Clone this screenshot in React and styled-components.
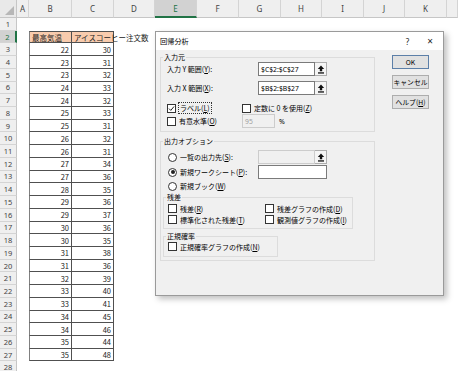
import React from "react";
import styled, { createGlobalStyle } from "styled-components";

const GlobalStyle = createGlobalStyle`
  body {
    margin: 0;
    background: #ffffff;
    font-family: "Noto Sans CJK JP", "Noto Sans", sans-serif;
  }
`;

const colWidths = [17, 12, 43, 42, 41, 42, 42, 42, 41, 42, 41, 42, 11];
const letters = ["", "A", "B", "C", "D", "E", "F", "G", "H", "I", "J", "K", ""];
const ROWS = 28;

const data = [
  [22, 30], [23, 31], [23, 32], [24, 33], [24, 32], [25, 33], [25, 31],
  [26, 32], [26, 31], [27, 34], [27, 36], [28, 35], [29, 36], [29, 37],
  [30, 36], [30, 35], [31, 38], [31, 36], [32, 39], [33, 40], [33, 41],
  [34, 45], [34, 46], [35, 44], [35, 48],
];

const Page = styled.div`
  position: relative;
  width: 458px;
  height: 371px;
  overflow: hidden;
`;

const Sheet = styled.div`
  display: grid;
  grid-template-columns: ${colWidths.map((w) => `${w}px`).join(" ")};
  grid-template-rows: 18px repeat(${ROWS}, 12.72px);
  background: #ffffff;
`;

const Corner = styled.div`
  position: relative;
  background: #e9e9e9;
  border-right: 1px solid #c6c6c6;
  border-bottom: 1px solid #c6c6c6;
  box-sizing: border-box;
  &::after {
    content: "";
    position: absolute;
    right: 2px;
    bottom: 2px;
    border-style: solid;
    border-width: 0 0 9px 9px;
    border-color: transparent transparent #b7b7b7 transparent;
  }
`;

const ColHead = styled.div`
  box-sizing: border-box;
  display: flex;
  align-items: center;
  justify-content: center;
  font-family: "Noto Sans", sans-serif;
  font-size: 8px;
  color: ${({ $selected }) => ($selected ? "#217346" : "#444")};
  background: ${({ $selected }) => ($selected ? "#d2d2d2" : "#efefef")};
  border-right: 1px solid #d4d4d4;
  border-bottom: ${({ $selected }) =>
    $selected ? "2px solid #217346" : "1px solid #c6c6c6"};
`;

const RowHead = styled.div`
  box-sizing: border-box;
  display: flex;
  align-items: center;
  justify-content: center;
  font-family: "Noto Sans", sans-serif;
  font-size: 7.5px;
  color: ${({ $selected }) => ($selected ? "#217346" : "#444")};
  background: ${({ $selected }) => ($selected ? "#d2d2d2" : "#efefef")};
  border-bottom: 1px solid #d4d4d4;
  border-right: ${({ $selected }) =>
    $selected ? "2px solid #217346" : "1px solid #c6c6c6"};
`;

const Cell = styled.div`
  box-sizing: border-box;
  display: flex;
  align-items: center;
  justify-content: ${({ $align }) => ($align === "right" ? "flex-end" : "flex-start")};
  padding: 0 2px;
  font-size: 7.5px;
  color: #222;
  white-space: nowrap;
  overflow: visible;
  position: relative;
  z-index: ${({ $boxed }) => ($boxed ? 1 : 0)};
  background: ${({ $fill }) => $fill || "transparent"};
  border-right: ${({ $boxed }) => ($boxed ? "1px solid #505050" : "none")};
  border-bottom: ${({ $boxed }) => ($boxed ? "1px solid #505050" : "none")};
  border-top: ${({ $top }) => ($top ? "1px solid #505050" : "none")};
  border-left: ${({ $left }) => ($left ? "1px solid #808080" : "none")};
`;

const Dialog = styled.div`
  position: absolute;
  left: 155px;
  top: 31px;
  width: 289px;
  height: 265px;
  box-sizing: border-box;
  background: #f0f0f0;
  border: 1px solid #9a9a9a;
  box-shadow: 3px 3px 6px rgba(0, 0, 0, 0.25);
  display: flex;
  flex-direction: column;
  font-size: 7px;
  color: #000;
`;

const TitleBar = styled.div`
  height: 18px;
  background: #ffffff;
  display: flex;
  align-items: center;
  padding: 0 10px 0 4px;
  font-size: 7.2px;
`;

const TitleText = styled.div`
  flex: 1;
`;

const TitleGlyph = styled.span`
  font-family: "Noto Sans", sans-serif;
  font-size: ${({ $size }) => $size}px;
  color: #222;
  margin-left: ${({ $ml }) => $ml || 0}px;
`;

const Body = styled.div`
  display: flex;
  padding: 3px 0 0 4px;
  gap: 17px;
`;

const Main = styled.div`
  width: 215px;
  display: flex;
  flex-direction: column;
`;

const Group = styled.fieldset`
  margin: ${({ $mt }) => $mt || 0}px 0 0 0;
  padding: 0 0 ${({ $pb }) => $pb}px 2px;
  min-width: 0;
  width: ${({ $w }) => $w}px;
  box-sizing: border-box;
  border: 1px solid #dcdcdc;
  display: flex;
  flex-direction: column;
`;

const Legend = styled.legend`
  padding: 0 1px;
  font-size: 7px;
  line-height: 9px;
`;

const Row = styled.div`
  display: flex;
  align-items: center;
  height: ${({ $h }) => $h}px;
  margin-top: ${({ $mt }) => $mt || 0}px;
  padding-left: ${({ $pl }) => ($pl === undefined ? 4 : $pl)}px;
  white-space: nowrap;
`;

const Label = styled.div`
  width: ${({ $w }) => $w}px;
  display: flex;
  align-items: center;
  flex-shrink: 0;
`;

const Key = styled.span`
  text-decoration: underline;
`;

const TextBox = styled.div`
  width: ${({ $w }) => $w}px;
  height: 14px;
  box-sizing: border-box;
  display: flex;
  align-items: center;
  padding-left: 2px;
  font-family: "Noto Sans", sans-serif;
  font-size: 6.8px;
  color: ${({ $disabled }) => ($disabled ? "#a0a0a0" : "#000")};
  background: ${({ $disabled }) => ($disabled ? "#f0f0f0" : "#ffffff")};
  border: 1px solid ${({ $disabled }) => ($disabled ? "#cccccc" : "#7a7a7a")};
`;

const RefButton = styled.div`
  width: 12px;
  height: 14px;
  box-sizing: border-box;
  display: flex;
  align-items: center;
  justify-content: center;
  background: #f5f5f5;
  border: 1px solid #adadad;
  border-left: none;
`;

const Box = styled.span`
  width: 9px;
  height: 9px;
  box-sizing: border-box;
  flex-shrink: 0;
  display: inline-flex;
  align-items: center;
  justify-content: center;
  background: #ffffff;
  border: 1px solid #333;
  border-radius: ${({ $round }) => ($round ? "50%" : "0")};
  margin-right: 3px;
`;

const Dot = styled.span`
  width: 4px;
  height: 4px;
  border-radius: 50%;
  background: #222;
`;

const Focus = styled.span`
  outline: 1px dotted #333;
  padding: 0 1px;
`;

const Percent = styled.span`
  margin-left: 4px;
  font-family: "Noto Sans", sans-serif;
`;

const Buttons = styled.div`
  width: 37px;
  display: flex;
  flex-direction: column;
  gap: 6px;
  padding-top: 2px;
`;

const Button = styled.div`
  height: 14px;
  box-sizing: border-box;
  display: flex;
  align-items: center;
  justify-content: center;
  background: #e1e1e1;
  font-size: 6.8px;
  border: 1px solid ${({ $default }) => ($default ? "#5c7fa8" : "#adadad")};
`;

const UpArrow = () => (
  <svg width="8" height="9" viewBox="0 0 8 9">
    <polygon points="4,0.5 0.8,4 2.8,4 2.8,6.2 5.2,6.2 5.2,4 7.2,4" fill="#111" />
    <rect x="1" y="7.3" width="6" height="1.3" fill="#111" />
  </svg>
);

const CheckMark = () => (
  <svg width="7" height="7" viewBox="0 0 7 7">
    <polyline points="1,3.6 2.8,5.4 6,1.5" fill="none" stroke="#222" strokeWidth="1" />
  </svg>
);

const CheckOption = ({ w, checked, focus, children }) => (
  <Label $w={w}>
    <Box>{checked && <CheckMark />}</Box>
    {focus ? <Focus>{children}</Focus> : <span>{children}</span>}
  </Label>
);

const RadioOption = ({ w, checked, children }) => (
  <Label $w={w}>
    <Box $round>{checked && <Dot />}</Box>
    <span>{children}</span>
  </Label>
);

const SheetGrid = () => {
  const cells = [];
  letters.forEach((l, i) => {
    if (i === 0) cells.push(<Corner key="corner" />);
    else cells.push(<ColHead key={`h${i}`} $selected={l === "E"}>{l}</ColHead>);
  });
  for (let r = 1; r <= ROWS; r++) {
    cells.push(<RowHead key={`r${r}`} $selected={r === 2}>{r}</RowHead>);
    for (let c = 1; c < letters.length; c++) {
      const col = letters[c];
      const inTable = (col === "B" || col === "C") && r >= 2 && r <= 27;
      let text = "";
      let fill;
      let align = "right";
      if (inTable && r === 2) {
        fill = "#f8cbad";
        align = "left";
        text = col === "B" ? "最高気温" : "アイスコーヒー注文数";
      } else if (inTable) {
        text = data[r - 3][col === "B" ? 0 : 1];
      }
      cells.push(
        <Cell
          key={`c${c}-${r}`}
          $boxed={inTable}
          $top={inTable && r === 2}
          $left={inTable && col === "B"}
          $fill={fill}
          $align={align}
        >
          {text}
        </Cell>
      );
    }
  }
  return <Sheet>{cells}</Sheet>;
};

const RegressionDialog = () => (
  <Dialog>
    <TitleBar>
      <TitleText>回帰分析</TitleText>
      <TitleGlyph $size={8}>?</TitleGlyph>
      <TitleGlyph $size={10} $ml={18}>×</TitleGlyph>
    </TitleBar>
    <Body>
      <Main>
        <Group $pb={3}>
          <Legend>入力元</Legend>
          <Row $h={14}>
            <Label $w={91}>入力 Y 範囲(<Key>Y</Key>):</Label>
            <TextBox $w={57}>$C$2:$C$27</TextBox>
            <RefButton><UpArrow /></RefButton>
          </Row>
          <Row $h={14} $mt={5}>
            <Label $w={91}>入力 X 範囲(<Key>X</Key>):</Label>
            <TextBox $w={57}>$B$2:$B$27</TextBox>
            <RefButton><UpArrow /></RefButton>
          </Row>
          <Row $h={12} $mt={7}>
            <CheckOption w={75} checked focus>ラベル(<Key>L</Key>)</CheckOption>
            <CheckOption w={120}>定数に 0 を使用(<Key>Z</Key>)</CheckOption>
          </Row>
          <Row $h={14}>
            <CheckOption w={75}>有意水準(<Key>O</Key>)</CheckOption>
            <TextBox $w={33} $disabled>95</TextBox>
            <Percent>%</Percent>
          </Row>
        </Group>
        <Group $mt={5} $pb={3}>
          <Legend>出力オプション</Legend>
          <Row $h={14} $mt={4} $pl={5}>
            <RadioOption w={90}>一覧の出力先(<Key>S</Key>):</RadioOption>
            <TextBox $w={57} $disabled />
            <RefButton><UpArrow /></RefButton>
          </Row>
          <Row $h={14} $mt={1} $pl={5}>
            <RadioOption w={90} checked>新規ワークシート(<Key>P</Key>):</RadioOption>
            <TextBox $w={69} />
          </Row>
          <Row $h={12} $mt={1} $pl={5}>
            <RadioOption w={90}>新規ブック(<Key>W</Key>)</RadioOption>
          </Row>
          <Group $w={190} $mt={1} $pb={3}>
            <Legend>残差</Legend>
            <Row $h={11} $mt={1} $pl={2}>
              <CheckOption w={97}>残差(<Key>R</Key>)</CheckOption>
              <CheckOption w={88}>残差グラフの作成(<Key>D</Key>)</CheckOption>
            </Row>
            <Row $h={11} $pl={2}>
              <CheckOption w={97}>標準化された残差(<Key>T</Key>)</CheckOption>
              <CheckOption w={88}>観測値グラフの作成(<Key>I</Key>)</CheckOption>
            </Row>
          </Group>
          <Group $w={115} $mt={3} $pb={4}>
            <Legend>正規確率</Legend>
            <Row $h={11} $pl={2}>
              <CheckOption w={108}>正規確率グラフの作成(<Key>N</Key>)</CheckOption>
            </Row>
          </Group>
        </Group>
      </Main>
      <Buttons>
        <Button $default>OK</Button>
        <Button>キャンセル</Button>
        <Button>ヘルプ(<Key>H</Key>)</Button>
      </Buttons>
    </Body>
  </Dialog>
);

const App = () => (
  <Page>
    <GlobalStyle />
    <SheetGrid />
    <RegressionDialog />
  </Page>
);

export default App;
